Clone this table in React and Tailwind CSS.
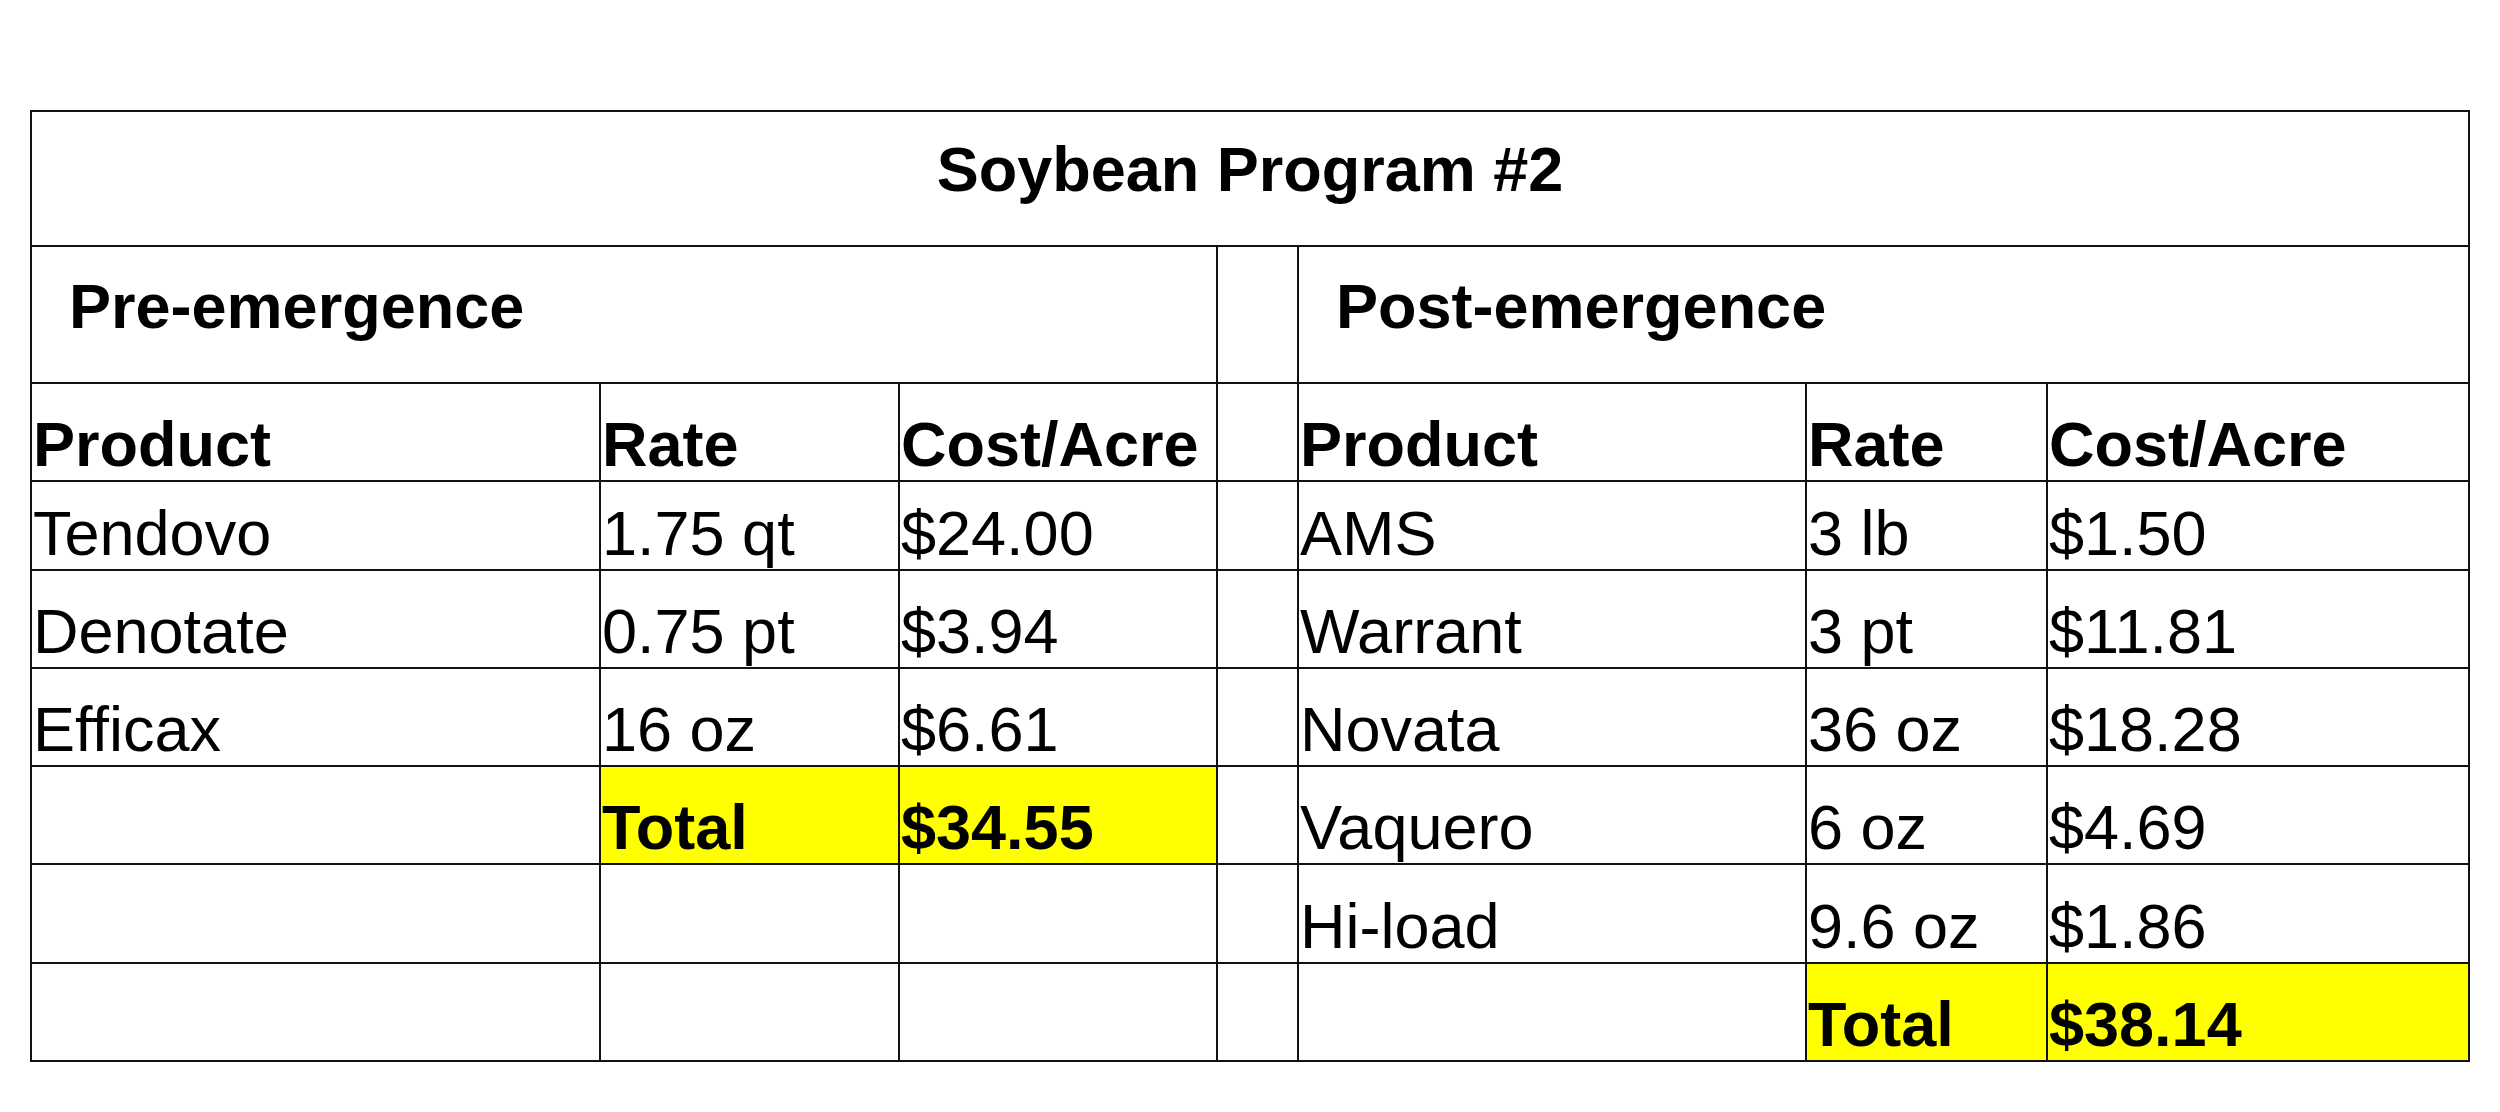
import React from "react";

const font = { fontFamily: '"Liberation Sans", Arial, sans-serif' };

function Cell({ children, bold, yellow, className = "" }) {
  return (
    <div
      className={`flex items-end pl-[1px] text-[63px] leading-[1.12] text-black whitespace-nowrap overflow-hidden ${
        bold ? "font-bold" : "font-normal"
      } ${yellow ? "bg-[#ffff00]" : "bg-white"} ${className}`}
    >
      {children}
    </div>
  );
}

const rows = [
  [["Tendovo"], ["1.75 qt"], ["$24.00"], [""], ["AMS"], ["3 lb"], ["$1.50"]],
  [["Denotate"], ["0.75 pt"], ["$3.94"], [""], ["Warrant"], ["3 pt"], ["$11.81"]],
  [["Efficax"], ["16 oz"], ["$6.61"], [""], ["Novata"], ["36 oz"], ["$18.28"]],
  [[""], ["Total", "y"], ["$34.55", "y"], [""], ["Vaquero"], ["6 oz"], ["$4.69"]],
  [[""], [""], [""], [""], ["Hi-load"], ["9.6 oz"], ["$1.86"]],
  [[""], [""], [""], [""], [""], ["Total", "y"], ["$38.14", "y"]],
];

export default function App() {
  return (
    <div className="w-[2500px] h-[1112px] bg-white pt-[110px] pl-[30px]" style={font}>
      <div className="inline-grid bg-[#111] p-[2px] gap-[2px] grid-cols-[567px_297px_316px_79px_506px_239px_420px] grid-rows-[133px_135px_96px_87px_96px_96px_96px_97px_96px]">
        <div className="col-span-7 bg-white flex items-end justify-center pb-[40px] text-[63px] leading-[1.12] font-bold text-black">
          Soybean Program #2
        </div>
        <div className="col-span-3 bg-white flex items-end pl-[37px] pb-[40px] text-[63px] leading-[1.12] font-bold text-black">
          Pre-emergence
        </div>
        <div className="bg-white" />
        <div className="col-span-3 bg-white flex items-end pl-[37px] pb-[40px] text-[63px] leading-[1.12] font-bold text-black">
          Post-emergence
        </div>
        <Cell bold>Product</Cell>
        <Cell bold>Rate</Cell>
        <Cell bold>Cost/Acre</Cell>
        <Cell />
        <Cell bold>Product</Cell>
        <Cell bold>Rate</Cell>
        <Cell bold>Cost/Acre</Cell>
        {rows.map((r, i) =>
          r.map(([t, y], j) => (
            <Cell key={`${i}-${j}`} bold={!!y} yellow={!!y}>
              {t}
            </Cell>
          ))
        )}
      </div>
    </div>
  );
}
